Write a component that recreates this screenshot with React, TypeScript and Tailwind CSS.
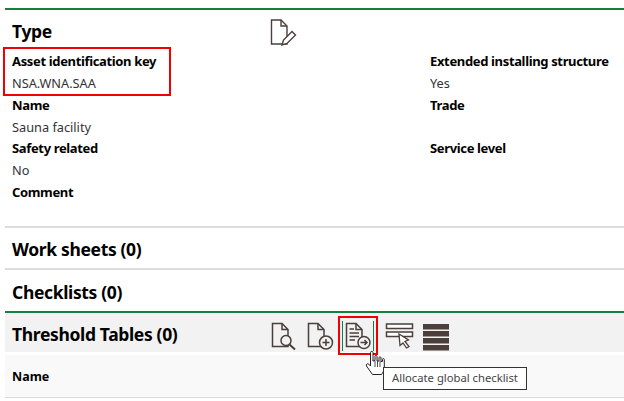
import React from 'react';

const ink = '#4a3f3a';

function PageIcon({ children }: { children?: React.ReactNode }) {
  return (
    <svg width="30" height="30" viewBox="0 0 30 30" fill="none" stroke={ink} strokeWidth="1.5">
      <path d="M3.5 2.5H13L19 8.5V25.5H3.5Z" fill="#f2f2f2" />
      <path d="M13 2.5V8.5H19" />
      {children}
    </svg>
  );
}

function Field({ label, value }: { label: string; value?: string }) {
  return (
    <div className="h-[43.5px] pt-[4px]">
      <div className="text-[13px] leading-[18px] font-bold tracking-[-0.35px] text-black">{label}</div>
      {value && <div className="text-[12.75px] leading-[18px] mt-[4px] text-[#333]">{value}</div>}
    </div>
  );
}

function HandCursor() {
  return (
    <svg width="20" height="26" viewBox="0 0 20 26" fill="#fff" stroke="#222" strokeWidth="1">
      <path d="M5.5 2.5C5.5 1 8 1 8 2.5V11L10 10.5V6.5C10 5 12 5 12 6.5V11L14 11V7.8C14 6.5 16 6.5 16 7.8V11.5L17.5 11.5V9.5C17.5 8.2 19.3 8.2 19.3 9.5V17C19.3 21 17.5 23 16.5 24.5H7.5L1.5 16C0.5 14.5 2.5 13 3.8 14.2L5.5 16Z" />
      <path d="M10 11V17M12.5 11V17M15 11V17" strokeWidth="0.8" />
    </svg>
  );
}

export default function App() {
  return (
    <div className="relative w-[624px] h-[401px] bg-white overflow-hidden pl-[5px] pt-[8px] font-['Noto_Sans','Open_Sans',sans-serif]">
      <section className="border-t-2 border-[#14803f] h-[218px]">
        <div className="flex items-center h-[38px] pt-[6px] pl-[7px]">
          <h2 className="w-[258px] -mt-[2px] text-[17.5px] font-bold tracking-[-0.35px] text-black">Type</h2>
          <svg width="30" height="30" viewBox="0 0 30 30" fill="none" stroke={ink} strokeWidth="1.4">
            <path d="M1.5 3H11L17 9V27H1.5Z" />
            <path d="M11 3V9H17" />
            <path d="M12 28L13.5 23L22 14.5L25.5 18L17 26.5Z" fill="#fff" />
          </svg>
        </div>
        <div className="grid grid-cols-[418px_1fr] pl-[7px]">
          <div>
            <Field label="Asset identification key" value="NSA.WNA.SAA" />
            <Field label="Name" value="Sauna facility" />
            <Field label="Safety related" value="No" />
            <Field label="Comment" />
          </div>
          <div>
            <Field label="Extended installing structure" value="Yes" />
            <Field label="Trade" />
            <Field label="Service level" />
          </div>
        </div>
      </section>

      <section className="border-t-2 border-[#dcdcdc] h-[42px] pt-[2px] flex items-center pl-[7px]">
        <h2 className="text-[17.5px] font-bold tracking-[-0.35px] text-black">Work sheets (0)</h2>
      </section>
      <section className="border-t-2 border-[#dcdcdc] h-[43px] pt-[4px] flex items-center pl-[7px]">
        <h2 className="text-[17.5px] font-bold tracking-[-0.35px] text-black">Checklists (0)</h2>
      </section>

      <section className="border-t-2 border-[#14803f]">
        <div className="flex items-center h-[39px] bg-[#f2f2f2] pl-[7px]">
          <h2 className="w-[257px] mt-[4px] text-[17.5px] font-bold tracking-[-0.35px] text-black">Threshold Tables (0)</h2>
          <div className="flex items-center mt-[6px]">
            <PageIcon>
              <circle cx="17" cy="19.5" r="5" fill="#f2f2f2" />
              <path d="M20.5 23.5L26 28.5" strokeWidth="2" />
            </PageIcon>
            <div className="ml-[6px]">
              <PageIcon>
                <circle cx="21" cy="21.5" r="6.5" fill="#f2f2f2" />
                <path d="M21 18V25M17.5 21.5H24.5" />
              </PageIcon>
            </div>
            <div className="ml-[7px] w-[32px] h-[30px] border-x border-[#14803f]">
              <PageIcon>
                <path d="M6.5 8H11M6.5 12H16M6.5 15.5H16M6.5 19H12" />
                <circle cx="21" cy="21.5" r="6" fill="#f2f2f2" />
                <path d="M17.5 21.5H24M21.5 19L24 21.5L21.5 24" />
              </PageIcon>
            </div>
            <svg className="ml-[11px]" width="30" height="30" viewBox="0 0 30 30" fill="none" stroke={ink} strokeWidth="1.5">
              <rect x="1.5" y="3" width="26" height="4.5" fill="#fff" />
              <rect x="1.5" y="11" width="26" height="4.5" fill="#fff" />
              <path d="M14 13L23.5 19L20 20.5L24 25.5L21.5 27L18 22L15 24.5Z" fill="#fff" strokeWidth="1.3" />
            </svg>
            <svg className="ml-[6px]" width="30" height="30" viewBox="0 0 30 30" fill={ink}>
              <rect x="2" y="3" width="26" height="5.5" />
              <rect x="2" y="10" width="26" height="5.5" />
              <rect x="2" y="17" width="26" height="5.5" />
              <rect x="2" y="24" width="26" height="5.5" />
            </svg>
          </div>
        </div>
        <div className="mt-[3px] h-[43px] pt-[2px] bg-[#f9f9f9] border-b border-[#dcdcdc] flex items-center pl-[7px]">
          <span className="text-[12.5px] font-bold text-black">Name</span>
        </div>
      </section>

      {/* annotations over the page */}
      <div className="absolute left-[3px] top-[47px] w-[168px] h-[49px] border-2 border-[#f00000]" />
      <div className="absolute left-[338px] top-[316px] w-[40px] h-[39px] border-2 border-[#f00000]" />
      <div className="absolute left-[365px] top-[350px]">
        <HandCursor />
      </div>
      <div className="absolute left-[383px] top-[367px] h-[23px] w-[144px] border border-[#333] bg-white flex items-center justify-center text-[11.25px] text-[#444] whitespace-nowrap">
        Allocate global checklist
      </div>
    </div>
  );
}
